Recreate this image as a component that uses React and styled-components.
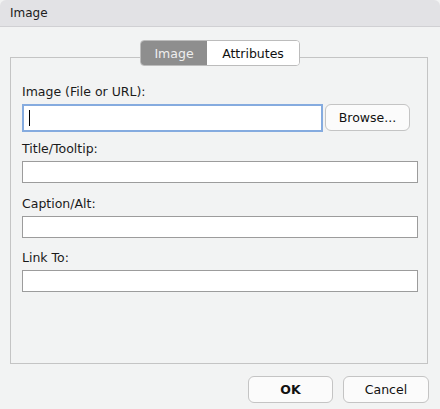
import React from "react";
import styled, { createGlobalStyle } from "styled-components";

const Global = createGlobalStyle`
  html, body { margin: 0; padding: 0; }
  body {
    width: 440px;
    height: 409px;
    overflow: hidden;
    background: #f2f3f3;
    font-family: "DejaVu Sans", "Liberation Sans", sans-serif;
    font-size: 12.5px;
    color: #1a1a1a;
  }
`;

const Window = styled.div`
  width: 440px;
  height: 409px;
  display: flex;
  flex-direction: column;
  background: #f2f3f3;
  border-radius: 6px 6px 0 0;
  overflow: hidden;
`;

const TitleBar = styled.div`
  height: 26px;
  flex: 0 0 26px;
  background: #e2e2e5;
  border-bottom: 1px solid #d0d0d3;
  display: flex;
  align-items: center;
  padding-left: 10px;
  font-size: 12px;
  color: #202020;
`;

const Content = styled.div`
  display: flex;
  flex-direction: column;
  padding: 13px 12px 0 10px;
`;

const TabRow = styled.div`
  display: flex;
  justify-content: center;
  position: relative;
  z-index: 1;
  padding-left: 2px;
`;

const Segmented = styled.div`
  display: flex;
  height: 26px;
  border: 1px solid #bcbcbc;
  border-radius: 4px;
  overflow: hidden;
  background: #ffffff;
  box-sizing: border-box;
`;

const Tab = styled.div`
  display: flex;
  align-items: center;
  justify-content: center;
  width: ${(p) => p.$w}px;
  background: ${(p) => (p.$active ? "#8e8e8e" : "#ffffff")};
  color: ${(p) => (p.$active ? "#eeeeee" : "#111111")};
  font-size: 12.5px;
`;

const GroupBox = styled.div`
  margin-top: -9px;
  height: 307px;
  box-sizing: border-box;
  border: 1px solid #c4c4c4;
  padding: 26px 9px 0 11px;
  display: flex;
  flex-direction: column;
`;

const Label = styled.div`
  height: 16px;
  line-height: 16px;
  margin-top: ${(p) => p.$mt || 0}px;
  margin-bottom: ${(p) => p.$mb || 4}px;
  color: #1a1a1a;
`;

const Row = styled.div`
  display: flex;
  align-items: flex-start;
  gap: 2px;
`;

const Field = styled.div`
  box-sizing: border-box;
  height: ${(p) => (p.$focused ? 28 : 22)}px;
  width: ${(p) => (p.$w ? `${p.$w}px` : "100%")};
  background: #ffffff;
  border: ${(p) => (p.$focused ? "2px solid #85abdf" : "1px solid #9c9c9c")};
  display: flex;
  align-items: center;
  padding-left: 5px;
`;

const Caret = styled.span`
  width: 1px;
  height: 16px;
  background: #000;
`;

const PushButton = styled.div`
  box-sizing: border-box;
  width: ${(p) => p.$w}px;
  height: ${(p) => p.$h}px;
  border: 1px solid #c4c4c4;
  border-radius: 6px;
  background: #fbfbfb;
  display: flex;
  align-items: center;
  justify-content: center;
  font-size: 12.5px;
  color: #111;
  font-weight: ${(p) => (p.$bold ? 600 : 400)};
`;

const Footer = styled.div`
  display: flex;
  justify-content: flex-end;
  gap: 10px;
  margin-top: 12px;
  margin-right: -1px;
`;

export default function App() {
  return (
    <>
      <Global />
      <Window>
        <TitleBar>Image</TitleBar>
        <Content>
          <TabRow>
            <Segmented>
              <Tab $active $w={66}>Image</Tab>
              <Tab $w={92}>Attributes</Tab>
            </Segmented>
          </TabRow>
          <GroupBox>
            <Label>Image (File or URL):</Label>
            <Row>
              <Field $focused $w={301}>
                <Caret />
              </Field>
              <PushButton $w={85} $h={27}>Browse...</PushButton>
            </Row>
            <Label $mt={9}>Title/Tooltip:</Label>
            <Field />
            <Label $mt={13}>Caption/Alt:</Label>
            <Field />
            <Label $mt={12}>Link To:</Label>
            <Field />
          </GroupBox>
          <Footer>
            <PushButton $w={85} $h={27} $bold>OK</PushButton>
            <PushButton $w={86} $h={27}>Cancel</PushButton>
          </Footer>
        </Content>
      </Window>
    </>
  );
}
